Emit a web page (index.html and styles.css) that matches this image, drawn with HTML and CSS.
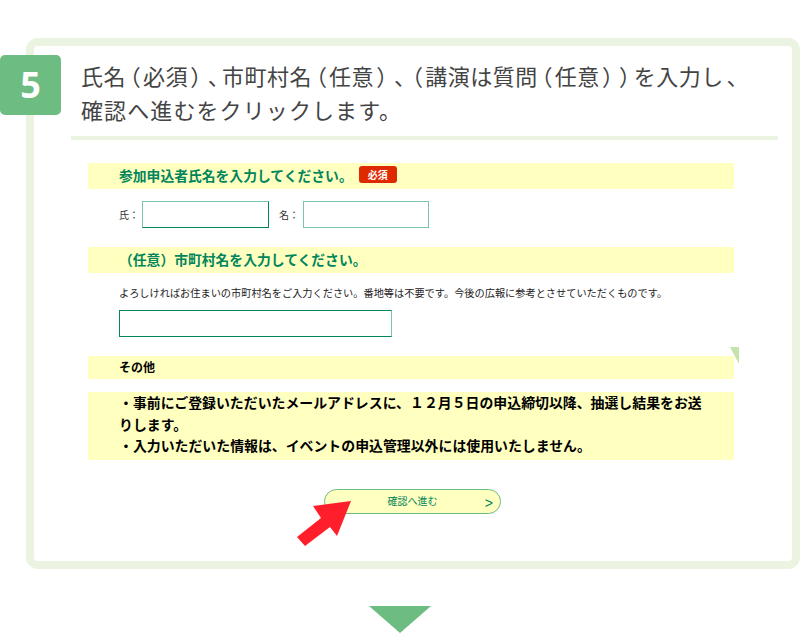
FILE: index.html
```html
<!DOCTYPE html>
<html lang="ja">
<head>
  <meta charset="UTF-8">
  <title>確認へ進む</title>
  <link rel="stylesheet" href="styles.css">
</head>
<body>

<div class="step">
  <div class="step-head">
    <div class="step-num">5</div>
    <p class="step-title">氏名<span class="pn">（</span>必須<span class="pn">）</span><span class="pn">、</span>市町村名<span class="pn">（</span>任意<span class="pn">）</span><span class="pn">、</span><span class="pn">（</span>講演は質問<span class="pn">（</span>任意<span class="pn">）</span><span class="pn">）</span>を入力し<span class="pn">、</span><br><span class="title-sub">確認へ進むをクリックします。</span></p>
  </div>

  <div class="shot">
    <h3 class="band band-head">参加申込者氏名を入力してください。<span class="must">必須</span></h3>
    <div class="name-row">
      <label>氏：</label>
      <input type="text" class="input-name input-sei">
      <label class="label-mei">名：</label>
      <input type="text" class="input-name input-mei">
    </div>

    <h3 class="band band-head">（任意）市町村名を入力してください。</h3>
    <p class="note">よろしければお住まいの市町村名をご入力ください。番地等は不要です。今後の広報に参考とさせていただくものです。</p>
    <input type="text" class="input-city">

    <h3 class="band band-other">その他</h3>
    <span class="corner"></span>
    <div class="notice">
      ・事前にご登録いただいたメールアドレスに、１２月５日の申込締切以降、抽選し結果をお送りします。<br>
      ・入力いただいた情報は、イベントの申込管理以外には使用いたしません。
    </div>

    <div class="btn-row">
      <a class="next-btn">確認へ進む<span class="next-mark">&gt;</span></a>
      <svg class="red-arrow" width="56" height="50" viewBox="0 0 56 50">
        <polygon points="54,2 16,7 24,19 0,38 8,47 33,28 40,37"/>
      </svg>
    </div>
  </div>
</div>

<div class="down"></div>

</body>
</html>
```

FILE: styles.css
```css
body {
  margin: 0;
  background-color: #fff;
  font-family: "Noto Sans CJK JP", "Noto Sans", sans-serif;
  height: 633px;
  overflow: hidden;
}

.step {
  position: relative;
  margin: 38px 0 0 26px;
  height: 515px;
  border: 8px solid #ebf3e1;
  border-radius: 12px;
  background-color: #fff;
}

.step-head {
  margin: 0 14px 0 37px;
  padding: 12px 0 10px 10px;
  border-bottom: 4px solid #ebf3e1;
  border-radius: 2px;
}

.step-num {
  position: absolute;
  left: -34px;
  top: 9px;
  width: 61px;
  height: 60px;
  background-color: #6dbd82;
  border-radius: 5px;
  color: #fff;
  font-family: "Open Sans", sans-serif;
  font-size: 36px;
  font-weight: 700;
  line-height: 60px;
  text-align: center;
}

.step-title {
  margin: 0;
  color: #444;
  font-size: 22px;
  line-height: 34px;
  letter-spacing: 0.5px;
  white-space: nowrap;
}

.title-sub {
  letter-spacing: 1.1px;
}

/* 括弧と読点だけ詰める */
.pn {
  font-feature-settings: "palt";
  letter-spacing: 0;
  padding: 0 3px;
}

.shot {
  position: relative;
  width: 646px;
  margin: 23px 0 0 54px;
  font-size: 10px;
}

.band {
  margin: 0;
  background-color: #ffffc0;
  padding-left: 31px;
  font-size: 13.8px;
  font-weight: 700;
}

.band-head {
  height: 26px;
  line-height: 24px;
  color: #00855c;
}

.must {
  display: inline-block;
  vertical-align: 2px;
  width: 38px;
  height: 17px;
  margin-left: 6px;
  background-color: #df2a00;
  border-radius: 3px;
  color: #fff;
  font-size: 10px;
  line-height: 17px;
  text-align: center;
}

.name-row {
  display: flex;
  align-items: center;
  height: 27px;
  margin: 12px 0 19px;
  padding-left: 31px;
  color: #333;
}

.name-row label {
  width: 23px;
}

.name-row .label-mei {
  width: 24px;
  margin-left: 10px;
}

input {
  display: block;
  box-sizing: border-box;
  margin: 0;
  padding: 0;
  background-color: #fff;
  border-radius: 0;
  outline: none;
}

.input-name {
  height: 27px;
  border: 1px solid #7cc3ab;
}

.input-sei {
  width: 127px;
  border-right-color: #00855c;
  border-bottom-color: #00855c;
}

.input-mei {
  width: 126px;
}

.note {
  margin: 12px 0 9px 31px;
  height: 16px;
  line-height: 16px;
  color: #222;
  white-space: nowrap;
  font-size: 10.2px;
}

.input-city {
  width: 273px;
  height: 27px;
  margin-left: 31px;
  border: 1px solid #00855c;
  border-right-color: #7cc3ab;
}

.band-other {
  margin-top: 19px;
  height: 23px;
  line-height: 22px;
  font-size: 12px;
  color: #000;
}

.corner {
  position: absolute;
  left: 642px;
  top: 184px;
  width: 9px;
  height: 17px;
  background-color: #c5e3ac;
  clip-path: polygon(0 0, 100% 0, 100% 100%);
}

.notice {
  margin-top: 13px;
  height: 68px;
  box-sizing: border-box;
  padding: 0 24px 0 31px;
  background-color: #ffffc0;
  color: #000;
  font-size: 13.9px;
  font-weight: 700;
  line-height: 21.5px;
}

.btn-row {
  position: relative;
  margin-top: 29px;
}

.next-btn {
  position: relative;
  display: block;
  box-sizing: border-box;
  width: 177px;
  height: 25px;
  margin-left: 236px;
  background-color: #ffffc0;
  border: 1px solid #6dbd82;
  border-radius: 13px;
  color: #00855c;
  font-size: 10px;
  line-height: 22px;
  text-align: center;
}

.next-mark {
  position: absolute;
  right: 7px;
  top: 2px;
  font-family: "Liberation Sans", sans-serif;
  font-size: 14px;
}

.red-arrow {
  position: absolute;
  left: 209px;
  top: 10px;
}

.red-arrow polygon {
  fill: #ff1f2b;
}

.down {
  width: 0;
  height: 0;
  margin: 37px 0 0 369px;
  border-top: 27px solid #6dbd82;
  border-left: 31px solid transparent;
  border-right: 31px solid transparent;
}
```
